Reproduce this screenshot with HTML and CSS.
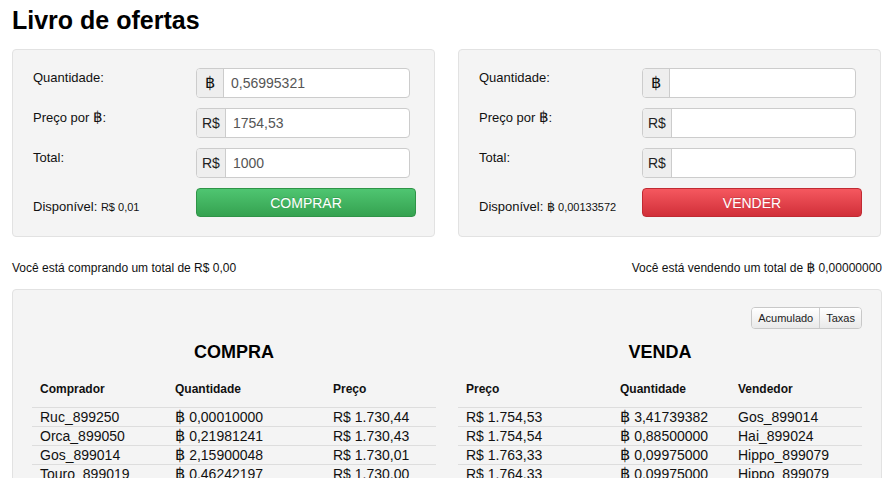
FILE: index.html
```html
<!DOCTYPE html>
<html lang="pt-BR">
<head>
    <meta charset="UTF-8">
    <meta name="viewport" content="width=device-width, initial-scale=1.0">
    <title>Livro de ofertas</title>
    <link rel="stylesheet" href="styles.css">
</head>
<body>
    <h1 class="title">Livro de ofertas</h1>

    <div class="orderForms">
        <div class="well">
            <div class="formGrid">
                <label class="formLabel">Quantidade:</label>
                <div class="inputGroup">
                    <span class="addon"><span class="coin">฿</span></span>
                    <input class="field" type="text" value="0,56995321">
                </div>
                <label class="formLabel">Preço por <span class="coin">฿</span>:</label>
                <div class="inputGroup">
                    <span class="addon">R$</span>
                    <input class="field" type="text" value="1754,53">
                </div>
                <label class="formLabel">Total:</label>
                <div class="inputGroup">
                    <span class="addon">R$</span>
                    <input class="field" type="text" value="1000">
                </div>
                <div class="formLabel available">Disponível: <small>R$ 0,01</small></div>
                <button class="btn btnBuy">COMPRAR</button>
            </div>
        </div>
        <div class="well">
            <div class="formGrid">
                <label class="formLabel">Quantidade:</label>
                <div class="inputGroup">
                    <span class="addon"><span class="coin">฿</span></span>
                    <input class="field" type="text" value="">
                </div>
                <label class="formLabel">Preço por <span class="coin">฿</span>:</label>
                <div class="inputGroup">
                    <span class="addon">R$</span>
                    <input class="field" type="text" value="">
                </div>
                <label class="formLabel">Total:</label>
                <div class="inputGroup">
                    <span class="addon">R$</span>
                    <input class="field" type="text" value="">
                </div>
                <div class="formLabel available">Disponível: <small><span class="coin">฿</span> 0,00133572</small></div>
                <button class="btn btnSell">VENDER</button>
            </div>
        </div>
    </div>

    <div class="summary">
        <span>Você está comprando um total de R$ 0,00</span>
        <span>Você está vendendo um total de <span class="coin">฿</span> 0,00000000</span>
    </div>

    <div class="well book">
        <div class="toolbar">
            <div class="btnGroup">
                <button class="smallBtn">Acumulado</button>
                <button class="smallBtn">Taxas</button>
            </div>
        </div>
        <div class="bookTables">
            <div>
                <h2 class="side">COMPRA</h2>
                <table class="orders">
                    <colgroup><col style="width:135px"><col style="width:158px"><col></colgroup>
                    <thead>
                        <tr><th>Comprador</th><th>Quantidade</th><th>Preço</th></tr>
                    </thead>
                    <tbody>
                        <tr><td>Ruc_899250</td><td><span class="coin">฿</span> 0,00010000</td><td>R$ 1.730,44</td></tr>
                        <tr><td>Orca_899050</td><td><span class="coin">฿</span> 0,21981241</td><td>R$ 1.730,43</td></tr>
                        <tr><td>Gos_899014</td><td><span class="coin">฿</span> 2,15900048</td><td>R$ 1.730,01</td></tr>
                        <tr><td>Touro_899019</td><td><span class="coin">฿</span> 0,46242197</td><td>R$ 1.730,00</td></tr>
                    </tbody>
                </table>
            </div>
            <div>
                <h2 class="side">VENDA</h2>
                <table class="orders">
                    <colgroup><col style="width:154px"><col style="width:118px"><col></colgroup>
                    <thead>
                        <tr><th>Preço</th><th>Quantidade</th><th>Vendedor</th></tr>
                    </thead>
                    <tbody>
                        <tr><td>R$ 1.754,53</td><td><span class="coin">฿</span> 3,41739382</td><td>Gos_899014</td></tr>
                        <tr><td>R$ 1.754,54</td><td><span class="coin">฿</span> 0,88500000</td><td>Hai_899024</td></tr>
                        <tr><td>R$ 1.763,33</td><td><span class="coin">฿</span> 0,09975000</td><td>Hippo_899079</td></tr>
                        <tr><td>R$ 1.764,33</td><td><span class="coin">฿</span> 0,09975000</td><td>Hippo_899079</td></tr>
                    </tbody>
                </table>
            </div>
        </div>
    </div>
</body>
</html>
```

FILE: styles.css
```css
html, body{
    overflow: hidden;
}
body{
    margin: 0;
    padding: 0 12px;
    font-family: "Liberation Sans", Arial, "DejaVu Sans", sans-serif;
    color: #222;
    background: #fff;
}
.coin{
    font-family: "DejaVu Sans", sans-serif;
    font-size: 1.15em;
    line-height: 0;
    color: #111;
}
.title{
    margin: 3px 0 12px;
    font-size: 25px;
    line-height: 34px;
    font-weight: bold;
    color: #000;
}
.orderForms{
    display: grid;
    grid-template-columns: 423px 423px;
    gap: 23px;
}
.well{
    background: #f4f4f4;
    border: 1px solid #e2e2e2;
    border-radius: 4px;
}
.orderForms .well{
    padding: 18px 19px 19px 20px;
}
.formGrid{
    display: grid;
    grid-template-columns: 163px 220px;
    row-gap: 10px;
}
.formLabel{
    font-size: 13px;
    line-height: 16px;
    padding-top: 2px;
    color: #111;
}
.available{
    padding-top: 11px;
}
.available small{
    font-size: 11px;
}
.inputGroup{
    display: flex;
    width: 214px;
    height: 30px;
    box-sizing: border-box;
    border: 1px solid #ccc;
    border-radius: 4px;
    background: #fff;
    overflow: hidden;
}
.addon{
    display: flex;
    align-items: center;
    justify-content: center;
    min-width: 27px;
    box-sizing: border-box;
    padding: 0 5px;
    background: #eee;
    border-right: 1px solid #ccc;
    font-size: 14px;
    color: #222;
}
.field{
    flex: 1;
    min-width: 0;
    border: none;
    outline: none;
    padding: 0 7px;
    font-family: inherit;
    font-size: 14px;
    color: #555;
    background: transparent;
}
.btn{
    width: 220px;
    height: 29px;
    border-radius: 4px;
    font-family: inherit;
    font-size: 14px;
    color: #fff;
    cursor: pointer;
    text-shadow: 0 -1px 0 rgba(0,0,0,0.15);
}
.btnBuy{
    background: linear-gradient(#4fc571, #35a250);
    border: 1px solid #2f9447;
}
.btnSell{
    background: linear-gradient(#f5585f, #d12f39);
    border: 1px solid #c02a32;
}
.summary{
    display: flex;
    justify-content: space-between;
    margin: 23px 0 13px;
    font-size: 12px;
    line-height: 16px;
    color: #111;
}
.book{
    padding: 17px 19px 12px;
}
.toolbar{
    display: flex;
    justify-content: flex-end;
}
.btnGroup{
    display: flex;
    border: 1px solid #c8c8c8;
    border-radius: 4px;
    overflow: hidden;
}
.smallBtn{
    height: 20px;
    padding: 0 6px;
    border: none;
    background: linear-gradient(#fff, #e9e9e9);
    font-family: inherit;
    font-size: 11px;
    color: #222;
}
.smallBtn + .smallBtn{
    border-left: 1px solid #ccc;
}
.bookTables{
    display: grid;
    grid-template-columns: 1fr 1fr;
    gap: 22px;
}
.side{
    margin: 13px 0 13px;
    text-align: center;
    font-size: 18px;
    line-height: 20px;
    color: #000;
}
.orders{
    width: 100%;
    border-collapse: collapse;
    table-layout: fixed;
}
.orders th{
    text-align: left;
    padding: 6px 8px 10px;
    font-size: 12px;
    line-height: 16px;
    color: #111;
}
.orders td{
    padding: 0 8px;
    border-top: 1px solid #ddd;
    font-size: 14px;
    line-height: 18px;
    color: #111;
    white-space: nowrap;
}
```
